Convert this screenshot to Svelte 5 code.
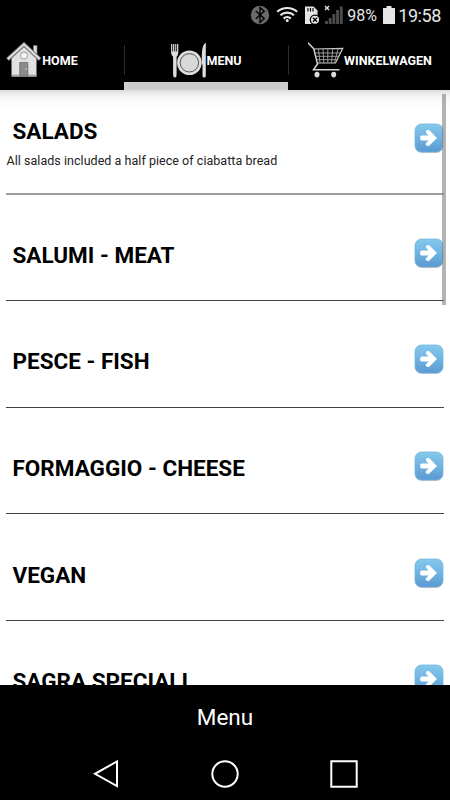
<script lang="ts">
  type Category = { name: string; note?: string };

  const categories: Category[] = [
    { name: 'SALADS', note: 'All salads included a half piece of ciabatta bread' },
    { name: 'SALUMI - MEAT' },
    { name: 'PESCE - FISH' },
    { name: 'FORMAGGIO - CHEESE' },
    { name: 'VEGAN' },
    { name: 'SAGRA SPECIALI' }
  ];

  let activeTab = $state('menu');
</script>

<div class="screen">
  <div class="status">
    <svg class="status-icons" width="94" height="30" viewBox="0 0 94 30">
      <!-- bluetooth -->
      <circle cx="10" cy="15" r="9.2" fill="#6b6b6b" />
      <path d="M5.8 11l8.4 7.6-4.2 3.8V7.6l4.2 3.6-8.4 7.6" fill="none" stroke="#000" stroke-width="1.4" />
      <!-- wifi -->
      <g fill="none" stroke="#e6e6e6" stroke-width="2.2">
        <path d="M27.2 11.8a15 15 0 0 1 20 0" />
        <path d="M30.4 15.3a10 10 0 0 1 13.6 0" />
        <path d="M33.6 18.6a5.2 5.2 0 0 1 7.2 0" />
      </g>
      <circle cx="37.2" cy="20.6" r="1.5" fill="#e6e6e6" />
      <!-- sd card -->
      <path d="M55 6.5h8.5l4 4V24H55z" fill="#e6e6e6" />
      <path d="M58 8v3.5M60.5 8v3.5M63 8v3.5" stroke="#000" stroke-width="1.1" />
      <circle cx="65" cy="19.8" r="4.7" fill="#e6e6e6" stroke="#000" stroke-width="1.3" />
      <path d="M63 17.8l4 4m0-4l-4 4" stroke="#000" stroke-width="1.3" />
      <!-- signal -->
      <path d="M75 6l4 4m0-4l-4 4" stroke="#e6e6e6" stroke-width="1.4" />
      <path d="M75 21h2.9v3H75zM78.7 18h2.9v6h-2.9zM82.4 14h2.9v10h-2.9zM86.1 10H89v14h-2.9zM89.8 6.5h2.9V24h-2.9z" fill="#4c4c4c" />
    </svg>
    <span class="percent">98%</span>
    <svg class="battery" width="12" height="18" viewBox="0 0 12 18">
      <path d="M3.5 0h5v2H12v16H0V2h3.5z" fill="#e6e6e6" />
    </svg>
    <span class="clock">19:58</span>
  </div>

  <nav class="tabs">
    <button class="tab" class:active={activeTab === 'home'} onclick={() => (activeTab = 'home')}>
      <svg width="36" height="36" viewBox="0 0 36 36">
        <path d="M27.5 3.5H31V13l-3.5-3z" fill="#ddd" stroke="#777" stroke-width=".7" />
        <path d="M5.5 16L18 4l12.5 12v18.5h-25z" fill="#e2e2e2" />
        <path d="M6 32.5h24.5v2H6z" fill="#aaa" />
        <path d="M1.5 17.5L18 2.5l16 15" fill="none" stroke="#777" stroke-width="4" />
        <path d="M1.8 17L18 2.3 33.7 17" fill="none" stroke="#e0e0e0" stroke-width="2" />
        <circle cx="18" cy="13.5" r="3.4" fill="#f3f3f3" stroke="#aaa" stroke-width="1.1" />
        <path d="M13.8 20.5h8v13.5h-8z" fill="#8b8b8b" stroke="#777" />
        <circle cx="20" cy="27" r=".8" fill="#ddd" />
      </svg>
      <span>HOME</span>
    </button>
    <button class="tab" class:active={activeTab === 'menu'} onclick={() => (activeTab = 'menu')}>
      <svg width="36" height="36" viewBox="-.6 0 36 36">
        <path d="M.5 2v8.5Q.8 14 2.5 14.8V32q0 3.5 1.8 3.5T6 32V14.8q1.6-.8 1.7-4.3V2H6.5v7.5h-.8V2H4.6v7.5h-.9V2H2.5v7.5h-.8V2z" fill="#ddd" />
        <circle cx="18.8" cy="20.8" r="12.3" fill="#dcdcdc" />
        <circle cx="18.8" cy="20.8" r="9.2" fill="#d9d9d9" stroke="#555" stroke-width="1" />
        <path d="M35.2.5V34q0 1.5-1.7 1.5T31.9 34V22.5l-.7-.5V13Q31.3 3 35.2.5z" fill="#dedede" />
      </svg>
      <span>MENU</span>
    </button>
    <button class="tab" class:active={activeTab === 'cart'} onclick={() => (activeTab = 'cart')}>
      <svg width="36" height="36" viewBox="0 0 36 36">
        <path d="M0 .8l5.8 6L9.5 22l-4 5.7h26" fill="none" stroke="#d2d2d2" stroke-width="1.5" />
        <path d="M5.8 7l29-.7L27.5 21H9.2" fill="none" stroke="#c7c7c7" stroke-width="1.2" />
        <path d="M7 11h25.5M8 14.3h23M8.7 17.7h20.6M10.5 7l1.5 14M15 7l.8 14M19.8 7v14M24.7 7l-1.2 14M30 7l-3.5 14" fill="none" stroke="#a8a8a8" stroke-width=".9" />
        <ellipse cx="9" cy="32.6" rx="2.5" ry="2.8" fill="#ddd" />
        <ellipse cx="25.7" cy="32.6" rx="2.5" ry="2.8" fill="#ddd" />
      </svg>
      <span>WINKELWAGEN</span>
    </button>
  </nav>

  <main class="list">
    {#each categories as category}
      <div class="row" class:with-note={category.note}>
        <div class="info">
          <h2>{category.name}</h2>
          {#if category.note}
            <p>{category.note}</p>
          {/if}
        </div>
        <svg class="arrow" width="30" height="31" viewBox="0 0 30 31">
          <defs>
            <linearGradient id="arrow-fill" x1="0" y1="0" x2="0" y2="1">
              <stop offset="0" stop-color="#85c9ed" />
              <stop offset=".5" stop-color="#70b4e1" />
              <stop offset="1" stop-color="#5a99d2" />
            </linearGradient>
          </defs>
          <rect x="1" y="2" width="28" height="28" rx="6.5" fill="#777" opacity=".4" />
          <rect x="1" y="1" width="28" height="28" rx="6.5" fill="url(#arrow-fill)" stroke="#72b5de" stroke-width=".8" />
          <path d="M7.3 12.5h7.3l-2.6-2.7q-.7-1.2 1-2.5l2-.3L23 15l-8.1 8-2.2-.3q-1.5-1.2-.8-2.5l2.7-2.7H7.3q-1.2-.3-1.2-2.5t1.2-2.5z" fill="#fff" />
        </svg>
      </div>
    {/each}
    <div class="scrollbar"></div>
  </main>

  <footer class="title">Menu</footer>

  <div class="navbar">
    <svg width="28" height="28" viewBox="0 0 28 28"><path d="M25 1.5v24.5L3 13.8z" /></svg>
    <svg width="28" height="28" viewBox="0 0 28 28"><circle cx="14" cy="14" r="12.7" /></svg>
    <svg width="28" height="28" viewBox="0 0 28 28"><path d="M1.3 1.3h25.4v25.4H1.3z" /></svg>
  </div>
</div>

<style>
  :global(body) {
    margin: 0;
    background: #000;
  }

  .screen {
    display: flex;
    flex-direction: column;
    width: 450px;
    height: 800px;
    overflow: hidden;
    background: #000;
    color: #fff;
    font-family: Roboto, 'Liberation Sans', sans-serif;
  }

  .status {
    display: flex;
    align-items: center;
    justify-content: flex-end;
    height: 30px;
    padding-right: 9px;
    color: #e6e6e6;
  }

  .percent {
    width: 30px;
    font-size: 16px;
    line-height: 30px;
    padding-top: 1px;
  }

  .status-icons {
    margin-right: 3px;
  }

  .battery {
    margin: 0 3px 0 6px;
  }

  .clock {
    font-size: 18px;
    line-height: 30px;
    padding-top: 1px;
    letter-spacing: -0.4px;
  }

  .tabs {
    display: flex;
    flex-shrink: 0;
    height: 60px;
    margin-left: -40px;
  }

  .tab {
    position: relative;
    display: flex;
    flex: 0 0 164px;
    align-items: center;
    justify-content: center;
    box-sizing: border-box;
    padding: 8px 0 0;
    border: 0;
    border-bottom: 8px solid transparent;
    background: #000;
    color: #fff;
    font: bold 12.5px Roboto, 'Liberation Sans', sans-serif;
    cursor: pointer;
  }

  .tab + .tab::before {
    content: '';
    position: absolute;
    top: 7px;
    left: 0;
    width: 1px;
    height: 30px;
    margin-top: 8px;
    background: #2b2b2b;
  }

  .tab.active {
    border-bottom-color: #ccc;
  }

  .list {
    position: relative;
    height: 595px;
    padding: 0 6px;
    overflow: hidden;
    background: linear-gradient(#dedede, #f3f3f3 6px, #fcfcfc 13px, #fff 18px);
    color: #000;
  }

  .row {
    display: flex;
    align-items: center;
    justify-content: space-between;
    box-sizing: border-box;
    height: 106.6px;
    padding-top: 12px;
    border-bottom: 1px solid #444;
  }

  .row.with-note {
    height: 105px;
    margin-bottom: -0.5px;
    padding: 0 0 6px;
    border-bottom: 2px solid #9c9c9c;
  }

  h2 {
    margin: 3px 0 0 6.5px;
    font-size: 22.5px;
    line-height: 26px;
    font-weight: bold;
  }

  p {
    margin: 8px 0 0 0.5px;
    font-size: 12.5px;
    line-height: 18px;
    letter-spacing: 0.04px;
    color: #222;
  }

  .with-note h2 {
    margin-top: 11px;
  }

  .arrow {
    flex-shrink: 0;
  }

  .scrollbar {
    position: absolute;
    top: 4px;
    right: 4px;
    width: 4px;
    height: 211px;
    background: rgba(128, 128, 128, 0.6);
  }

  .title {
    height: 62px;
    padding-top: 2px;
    box-sizing: border-box;
    font-size: 22.5px;
    line-height: 61px;
    text-align: center;
  }

  .navbar {
    display: flex;
    align-items: center;
    justify-content: center;
    gap: 91px;
    height: 53px;
  }

  .navbar svg {
    fill: none;
    stroke: #fff;
    stroke-width: 2;
  }
</style>
